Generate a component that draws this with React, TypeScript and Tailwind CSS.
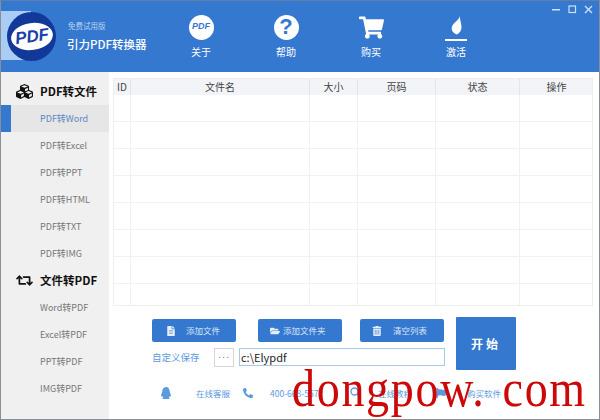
import { FaCubes, FaRetweet, FaFileAlt, FaFolderOpen, FaTrashAlt, FaQq, FaPhoneAlt, FaShoppingCart, FaFlag } from "react-icons/fa";

const columns = [
  { label: "ID", cls: "w-[17px]" },
  { label: "文件名", cls: "w-[179px]" },
  { label: "大小", cls: "w-[48px]" },
  { label: "页码", cls: "w-[78px]" },
  { label: "状态", cls: "w-[84px]" },
  { label: "操作", cls: "w-[74px]" },
];

function NavItem({ label, active }: { label: string; active?: boolean }) {
  return (
    <div className={`h-[27px] flex items-center text-[9px] ${active ? "bg-[#e6e6e6] text-[#5b86c4]" : "text-[#777777]"}`}>
      <div className={`w-[10px] h-full shrink-0 ${active ? "bg-[#3578d0]" : ""}`} />
      <span className="pl-[29px]">{label}</span>
    </div>
  );
}

function NavGroup({ icon, label }: { icon: React.ReactNode; label: string }) {
  return (
    <div className="h-[27px] flex items-center text-[11.5px] font-bold text-[#111111]">
      <div className="w-[39px] pl-[15px] flex text-[17px]">{icon}</div>
      <span>{label}</span>
    </div>
  );
}

function TopAction({ icon, label }: { icon: React.ReactNode; label: string }) {
  return (
    <div className="w-[50px] flex flex-col items-center text-white">
      <div className="h-[30px] flex items-center justify-center">{icon}</div>
      <span className="text-[10px] mt-[3px] leading-[14px]">{label}</span>
    </div>
  );
}

function ActionButton({ icon, label, gap, pl }: { icon: React.ReactNode; label: string; gap: string; pl: string }) {
  return (
    <button className={`w-[84px] h-[23px] bg-[#3578d0] rounded-[2px] text-white text-[8.5px] flex items-center ${pl} ${gap}`}>
      <span className="text-[10px] text-[#e6eefa]">{icon}</span>
      <span className="text-[#d8e5f7]">{label}</span>
    </button>
  );
}

function Contact({ icon, label, cls }: { icon: React.ReactNode; label: string; cls: string }) {
  return (
    <div className={`flex items-center text-[8.5px] text-[#5b9ade] ${cls}`}>
      {icon}
      <span>{label}</span>
    </div>
  );
}

export default function App() {
  return (
    <div className="relative w-[600px] h-[420px] overflow-hidden bg-white border border-[#8a8f96] border-t-[#5f7fa8] font-['Noto_Sans_CJK_SC','Noto_Sans',sans-serif]">
      <header className="relative h-[71px] bg-[#3578d0] flex">
        <div className="relative w-[175px] shrink-0 flex items-center">
          <div className="absolute left-0 top-[10px] w-[30px] h-[49px] bg-[#a9cdf5]" />
          <div className="relative ml-[6px] w-[49px] h-[49px] rounded-full bg-[#12399a] flex items-center justify-center">
            <div className="w-[42px] h-[27px] rounded-[50%] bg-white flex items-center justify-center -rotate-[8deg]">
              <span className="text-[#1a3fa6] text-[17px] font-bold italic font-['Liberation_Sans',sans-serif]">PDF</span>
            </div>
          </div>
          <div className="ml-[11px] text-white">
            <div className="text-[7.5px] leading-[12px] text-[#b9d3f2] pl-[1px]">免费试用版</div>
            <div className="text-[11.5px] leading-[18px] mt-[3px] font-medium whitespace-nowrap">引力PDF转换器</div>
          </div>
        </div>
        <div className="flex pt-[11px] gap-[35px]">
          <TopAction
            label="关于"
            icon={
              <div className="w-[25px] h-[25px] rounded-full bg-white flex items-center justify-center">
                <span className="text-[#3578d0] text-[9px] font-bold italic font-['Liberation_Sans',sans-serif]">PDF</span>
              </div>
            }
          />
          <TopAction
            label="帮助"
            icon={
              <div className="w-[25px] h-[25px] rounded-full bg-white flex items-center justify-center">
                <span className="text-[#3578d0] text-[22px] font-black leading-none font-['Liberation_Sans',sans-serif]">?</span>
              </div>
            }
          />
          <TopAction label="购买" icon={<FaShoppingCart className="text-[25px] text-white" />} />
          <TopAction
            label="激活"
            icon={
              <svg width="24" height="26" viewBox="0 0 24 26" fill="white" className="mt-[3px]">
                <path d="M16 0c-.5 3-4 5-6.500 8-2.500 3-2 6-.5 8 1 1.200 2.500 2 3.500 2.500 3-1 5-4 5-7.500 0-4-2-7-1.500-11z" />
                <rect x="1" y="23" width="22" height="2" />
              </svg>
            }
          />
        </div>
        <div className="absolute right-[6px] top-[4px] flex items-center gap-[7px] text-[#cfe0f5]">
          <svg width="9" height="9" viewBox="0 0 9 9"><rect x="0" y="4" width="8" height="1.500" fill="currentColor" /></svg>
          <svg width="9" height="9" viewBox="0 0 9 9"><rect x="1" y="1" width="6.500" height="6.500" fill="none" stroke="currentColor" strokeWidth="1.200" /></svg>
          <svg width="9" height="9" viewBox="0 0 9 9"><path d="M1 1l7 7M8 1l-7 7" stroke="currentColor" strokeWidth="1.400" /></svg>
        </div>
      </header>

      <div className="flex h-[347px]">
        <aside className="w-[108px] shrink-0 bg-[#f0f0f0] pt-[6px] h-[347px]">
          <NavGroup icon={<FaCubes />} label="PDF转文件" />
          <NavItem label="PDF转Word" active />
          <NavItem label="PDF转Excel" />
          <NavItem label="PDF转PPT" />
          <NavItem label="PDF转HTML" />
          <NavItem label="PDF转TXT" />
          <NavItem label="PDF转IMG" />
          <NavGroup icon={<FaRetweet />} label="文件转PDF" />
          <NavItem label="Word转PDF" />
          <NavItem label="Excel转PDF" />
          <NavItem label="PPT转PDF" />
          <NavItem label="IMG转PDF" />
        </aside>

        <main className="flex-1 pl-[4px] pt-[6px]">
          <div className="w-[480px] h-[228px] border border-[#eeeeee] overflow-hidden">
            <div className="flex h-[16px] bg-[#f2f4f7]">
              {columns.map((c) => (
                <div key={c.label} className={`${c.cls} shrink-0 text-center text-[10px] leading-[16px] text-[#444444] border-r border-[#e4e6ea]`}>
                  {c.label}
                </div>
              ))}
            </div>
            {[0, 1, 2, 3, 4, 5, 6, 7].map((r) => (
              <div key={r} className="flex h-[27px] border-b border-[#f1f1f1]">
                {columns.map((c) => (
                  <div key={c.label} className={`${c.cls} shrink-0 border-r border-[#f1f1f1]`} />
                ))}
              </div>
            ))}
          </div>

          <div className="flex mt-[11px] ml-[39px]">
            <div className="w-[293px]">
              <div className="flex gap-[22px] mt-[2px]">
                <ActionButton icon={<FaFileAlt />} label="添加文件" pl="pl-[14px]" gap="gap-[10px]" />
                <ActionButton icon={<FaFolderOpen />} label="添加文件夹" pl="pl-[12px]" gap="gap-[3px]" />
                <div className="-ml-[4px]">
                  <ActionButton icon={<FaTrashAlt />} label="清空列表" pl="pl-[12px]" gap="gap-[11px]" />
                </div>
              </div>
              <div className="flex items-center mt-[6px] h-[18px]">
                <span className="w-[62px] text-[9.5px] text-[#5b9ade]">自定义保存</span>
                <div className="w-[20px] h-[19px] border border-[#d5d5d5] text-[#888888] text-[11px] leading-[11px] pb-[5px] flex items-center justify-center tracking-[1px] font-['Liberation_Sans',sans-serif]">...</div>
                <input
                  readOnly
                  value="c:\Elypdf"
                  className="ml-[5px] w-[206px] h-[18px] border border-[#a9c9ec] text-[#222222] text-[11px] pl-[1px] outline-none"
                />
              </div>
            </div>
            <button className="ml-[11px] w-[60px] h-[53px] bg-[#3578d0] rounded-[1px] text-white text-[12px] font-bold tracking-[3px]">开始</button>
          </div>

          <div className="flex items-center h-[14px] mt-[16px] ml-[47px]">
            <Contact icon={<FaQq className="text-[12px] mr-[24px]" />} label="在线客服" cls="w-[83px]" />
            <Contact icon={<FaPhoneAlt className="text-[10px] mr-[17px]" />} label="400-668-5572" cls="w-[107px]" />
            <Contact
              icon={
                <svg width="12" height="12" viewBox="0 0 12 12" className="mr-[16px]" fill="none" stroke="currentColor" strokeWidth="1.300">
                  <circle cx="4.500" cy="4.500" r="3.500" />
                  <path d="M7 7l4 4" />
                </svg>
              }
              label="在线教程"
              cls="w-[86px]"
            />
            <Contact icon={<FaFlag className="text-[10px] mr-[21px]" />} label="购买软件" cls="" />
          </div>
        </main>
      </div>

      <div className="absolute left-[291px] top-[358px] text-[#cc0808] text-[46px] leading-[60px] tracking-[1.700px] [word-spacing:4px] scale-y-[1.15] whitespace-pre font-['Liberation_Serif',serif]">dongpow. com</div>
    </div>
  );
}
